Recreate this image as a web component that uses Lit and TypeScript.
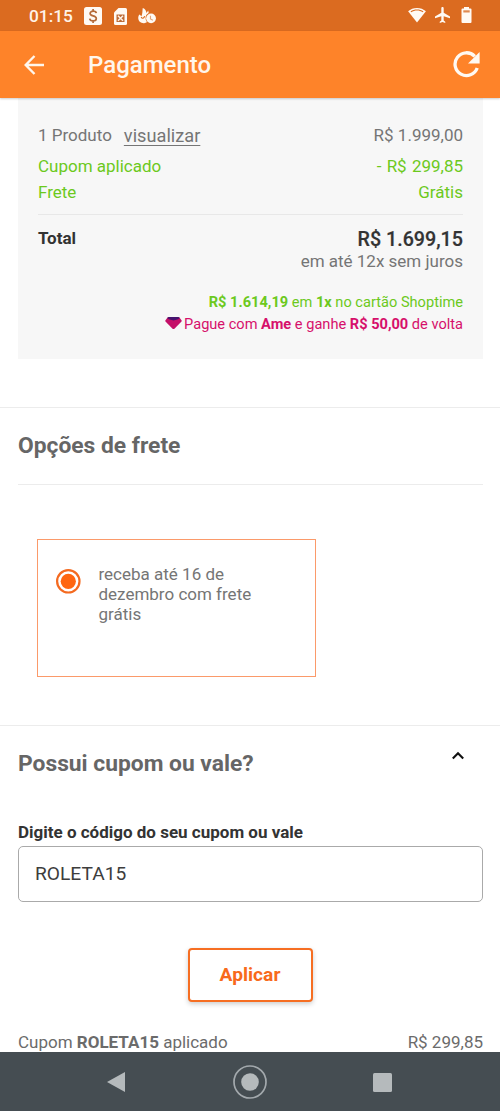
import { LitElement, html, css } from "lit";
import { customElement, property } from "lit/decorators.js";

@customElement("status-bar")
class StatusBar extends LitElement {
  static styles = css`
    :host { display: flex; height: 31px; box-sizing: border-box; align-items: center; background: #db6b20; color: #fff3e8; padding: 1px 28px 0 29px; }
    .clock { font-size: 17.3px; font-weight: 500; line-height: 20px; width: 55px; }
    .left, .right { display: flex; align-items: center; }
    .right { margin-left: auto; gap: 9px; }
    .right svg { margin-top: -2px; }
    svg { display: block; fill: #fffaf4; }
    .money { margin-right: 12px; }
    .sim { margin-right: 11px; }
  `;
  render() {
    return html`
      <div class="left">
        <span class="clock">01:15</span>
        <svg class="money" width="18" height="18" viewBox="0 0 18 18"><rect width="18" height="18" rx="2.5" /><path d="M12.300 6.200C12.100 4.900 10.900 4.200 9.200 4.200 7.300 4.200 6.100 5.100 6.100 6.500c0 3.200 6.200 1.600 6.200 5 0 1.500-1.300 2.400-3.200 2.400-1.900 0-3.200-.8-3.400-2.300M9.100 2v2.200M9.100 13.900v2.200" fill="none" stroke="#b56a38" stroke-width="1.700" /></svg>
        <svg class="sim" width="13" height="17" viewBox="0 0 13 17"><path d="M4.500 0H11.500A1.500 1.500 0 0 1 13 1.500V15.500A1.500 1.500 0 0 1 11.500 17H1.500A1.500 1.500 0 0 1 0 15.500V4.500z" /><path d="M2.500 6.500h8v7.500h-8z" fill="#bd6a35" /><path d="M4 7.700l5 5.100M9 7.700l-5 5.100" fill="none" stroke="#fff3e8" stroke-width="1.500" /></svg>
        <svg width="18" height="16" viewBox="0 0 19 17"><path d="M5 0C7.500 1 8.800 3 8.900 5.400L10.800 2.600 11.300 5.300C9 6.500 8 8.300 8 10.500 8 12.500 8.700 14 9.700 15 8.500 15.900 7.200 16.200 6 16.100 2.700 15.900.2 13.600.2 10.500.2 8.800.8 7.500 1.500 6.800L3.600 8.700C4.900 6 4.500 3 5 0z" /><path d="M3.300 9.500c1 2 3 1.800 3.700-.8" fill="none" stroke="#db6b20" stroke-width="1.200" /><circle cx="13.800" cy="11" r="5.200" /><path d="M13.200 8.200v3.400l2.600 1.400" fill="none" stroke="#e2a57b" stroke-width="1.200" /></svg>
      </div>
      <div class="right">
        <svg width="18" height="15" viewBox="0 0 19 16"><path d="M9.500 0C13.200 0 16.400 1.300 19 3.500L9.500 15.500 0 3.500C2.600 1.300 5.800 0 9.500 0z" /><path d="M2.600 3.600C6.500.9 12.500.9 16.400 3.600L15.700 4.600C11.900 2.100 7.100 2.100 3.300 4.600z" fill="#db6b20" /></svg>
        <svg width="15" height="16" viewBox="2 2 19 20"><path d="M21 16v-2l-8-5V3.500C13 2.670 12.330 2 11.500 2S10 2.670 10 3.500V9l-8 5v2l8-2.500V19l-2 1.500V22l3.500-1 3.500 1v-1.500L13 19v-5.500z" /></svg>
        <svg width="13" height="16" viewBox="0 0 13 16"><path d="M5 0h5v1.500h1.500a1 1 0 0 1 1 1V15a1 1 0 0 1-1 1h-8a1 1 0 0 1-1-1V2.500a1 1 0 0 1 1-1H5z" /><path d="M4.300 3.300h6.400v2.200H4.300z" fill="#e08a50" /></svg>
      </div>`;
  }
}

@customElement("app-header")
class AppHeader extends LitElement {
  @property() heading = "";
  static styles = css`
    :host { display: flex; height: 67px; box-sizing: border-box; align-items: center; background: #fe8329; padding: 0 20px 0 24px; position: relative; box-shadow: 0 1px 2px rgba(0, 0, 0, 0.2); }
    h1 { margin: 1px 0 0 43px; font-size: 24px; line-height: 30px; font-weight: 500; color: #fff6ec; }
    .refresh { margin-left: auto; }
    svg { display: block; }
  `;
  render() {
    return html`
      <svg width="21" height="20" viewBox="0 0 21 20" fill="none" stroke="#fff6ec" stroke-width="2.400"><path d="M20 10H2M10.500 1 1.700 10l8.800 9" /></svg>
      <h1>${this.heading}</h1>
      <svg class="refresh" width="27" height="27" viewBox="0 0 27 27"><path d="M21.800 5.400A11.400 11.400 0 1 0 24.200 17" fill="none" stroke="#fff9f2" stroke-width="3.300" /><path d="M26.600 1v11.500H15z" fill="#fff9f2" /></svg>`;
  }
}

@customElement("order-summary")
class OrderSummary extends LitElement {
  static styles = css`
    :host { display: block; margin: 0 17px 0 18px; height: 261px; box-sizing: border-box; background: #f7f7f7; padding: 24px 20px 0; font-size: 17px; line-height: 26px; color: #757575; }
    .row { display: flex; justify-content: space-between; height: 26px; white-space: nowrap; }
    .product { display: flex; gap: 12px; }
    .link { font-size: 18.200px; text-decoration: underline; text-underline-offset: 3px; text-decoration-thickness: 1px; line-height: 28px; }
    .first { margin-bottom: 5px; }
    .green { color: #6cc91d; }
    .discount { word-spacing: 1px; }
    .total { margin-top: 9px; border-top: 1px solid #e8e8e8; padding-top: 11px; height: 24px; line-height: 24px; color: #333; font-weight: 700; }
    .amount { font-size: 19.700px; line-height: 27px; font-weight: 500; -webkit-text-stroke: 0.2px #333; }
    .end { text-align: right; line-height: 22px; white-space: nowrap; }
    .notes { margin-top: 19px; font-size: 14.600px; }
    .ame { color: #d6106b; display: flex; justify-content: flex-end; align-items: center; white-space: pre; }
    svg { display: block; margin: -2px 2px 0 0; }
  `;
  render() {
    return html`
      <div class="row first"><span class="product"><span>1 Produto</span><span class="link">visualizar</span></span><span>R$ 1.999,00</span></div>
      <div class="row green"><span>Cupom aplicado</span><span class="discount">- R$ 299,85</span></div>
      <div class="row green"><span>Frete</span><span>Grátis</span></div>
      <div class="row total"><span>Total</span><span class="amount">R$ 1.699,15</span></div>
      <div class="end">em até 12x sem juros</div>
      <div class="notes">
        <div class="end green"><b>R$ 1.614,19</b> em <b>1x</b> no cartão Shoptime</div>
        <div class="end ame"><svg width="17" height="12" viewBox="0 0 17 12"><path d="M4 0h9Q14 0 14.800 1L16.500 3.200Q17 4 16.300 4.800L9.700 11.400Q8.500 12.400 7.300 11.400L.7 4.800Q0 4 .5 3.200L2.200 1Q3 0 4 0z" fill="#c40f68" /><path d="M4 0h9Q14 0 14.800 1L13 2.300 8.500 3.400 4 2.300 2.200 1Q3 0 4 0z" fill="#45146f" /></svg><span>Pague com <b>Ame</b> e ganhe <b>R$ 50,00</b> de volta</span></div>
      </div>`;
  }
}

@customElement("shipping-options")
class ShippingOptions extends LitElement {
  static styles = css`
    :host { display: block; margin-top: 48px; border-top: 1px solid #ececec; height: 318px; box-sizing: border-box; padding: 0 17px 0 18px; }
    h2 { margin: 0; padding: 23px 0 23px; font-size: 22.800px; line-height: 30px; font-weight: 700; color: #666; border-bottom: 1px solid #ececec; }
    .option { display: flex; margin: 54px 0 0 19px; width: 279px; height: 138px; box-sizing: border-box; border: 1px solid #fb9a6a; padding: 24px 40px 0 17px; gap: 17.500px; }
    svg { display: block; flex: none; margin-top: 4px; }
    p { margin: 0; font-size: 17px; line-height: 20px; color: #757575; }
  `;
  render() {
    return html`
      <h2>Opções de frete</h2>
      <div class="option">
        <svg width="26" height="26" viewBox="0 0 26 26"><circle cx="13.300" cy="13.300" r="11.200" fill="none" stroke="#f46a20" stroke-width="2.200" /><circle cx="13.300" cy="13.300" r="7.600" fill="#ff6610" /></svg>
        <p>receba até 16 de<br />dezembro com frete<br />grátis</p>
      </div>`;
  }
}

@customElement("coupon-form")
class CouponForm extends LitElement {
  @property() code = "";
  static styles = css`
    :host { display: block; border-top: 1px solid #ececec; padding: 0 17px 0 18px; }
    .head { display: flex; justify-content: space-between; padding-top: 23px; }
    h2 { margin: 0; font-size: 22.800px; line-height: 30px; font-weight: 700; color: #666; }
    .head svg { display: block; margin: 2px 18px 0 0; }
    label { display: block; margin-top: 43px; font-size: 17px; line-height: 20px; font-weight: 700; color: #333; white-space: nowrap; }
    input { display: block; margin: 4px 0 0; width: 100%; height: 56px; box-sizing: border-box; border: 1px solid #aaa; border-radius: 5px; padding: 0 16px 2px; background: #fff; font: 400 19.200px Roboto, sans-serif; color: #3d3d3d; outline: none; }
    button { display: block; margin: 46px auto 0; width: 125px; height: 54px; box-sizing: border-box; border: 2px solid #f66e22; border-radius: 4px; background: #fff; color: #f86a1b; font: 700 19.200px Roboto, sans-serif; padding: 0 1px 2px 0; box-shadow: 0 2px 5px rgba(0, 0, 0, 0.2); }
    .applied { display: flex; justify-content: space-between; margin-top: 30px; font-size: 17px; line-height: 21px; height: 21px; color: #6b6b6b; white-space: nowrap; }
  `;
  render() {
    return html`
      <div class="head"><h2>Possui cupom ou vale?</h2><svg width="14" height="9" viewBox="0 0 14 9"><path d="M1.800 7.500 7 2.300l5.200 5.200" fill="none" stroke="#111" stroke-width="2.100" /></svg></div>
      <label for="code">Digite o código do seu cupom ou vale</label>
      <input id="code" .value=${this.code} />
      <button>Aplicar</button>
      <div class="applied"><span>Cupom <b>${this.code}</b> aplicado</span><span>R$ 299,85</span></div>`;
  }
}

@customElement("nav-bar")
class NavBar extends LitElement {
  static styles = css`
    :host { display: flex; flex: none; height: 59px; background: #454d52; align-items: center; justify-content: space-between; padding: 1px 108px 0 107px; box-sizing: border-box; }
    svg { display: block; }
  `;
  render() {
    return html`
      <svg width="19" height="20" viewBox="0 0 19 20"><path d="M18 0v20L0 10z" fill="#b5babc" /></svg>
      <svg width="34" height="34" viewBox="0 0 34 34"><circle cx="17" cy="17" r="16" fill="none" stroke="#a3a9ad" stroke-width="1.700" /><circle cx="17" cy="17" r="8.800" fill="#b5babc" /></svg>
      <svg width="19" height="19" viewBox="0 0 19 19"><rect width="19" height="19" rx="1.500" fill="#b5babc" /></svg>`;
  }
}

@customElement("app-root")
class AppRoot extends LitElement {
  static styles = css`
    :host { display: flex; flex-direction: column; height: 1111px; width: 500px; overflow: hidden; background: #fff; font-family: Roboto, sans-serif; }
    main { flex: 1; min-height: 0; overflow: hidden; }
    status-bar, app-header { flex: none; }
    app-header { z-index: 1; }
  `;
  render() {
    return html`
      <status-bar></status-bar>
      <app-header heading="Pagamento"></app-header>
      <main>
        <order-summary></order-summary>
        <shipping-options></shipping-options>
        <coupon-form code="ROLETA15"></coupon-form>
      </main>
      <nav-bar></nav-bar>`;
  }
}
